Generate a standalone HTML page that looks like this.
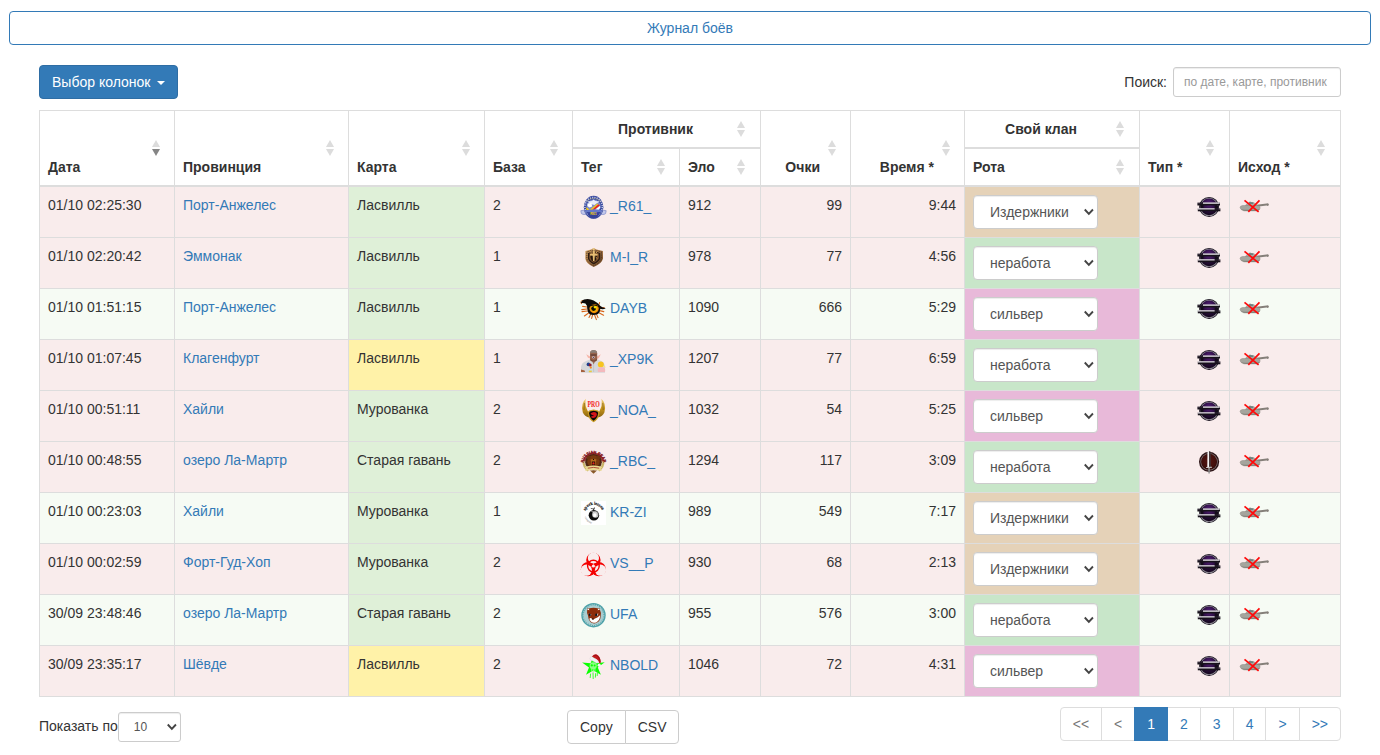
<!DOCTYPE html>
<html lang="ru"><head><meta charset="utf-8"><title>Журнал боёв</title>
<style>
*{box-sizing:border-box}
html,body{margin:0;padding:0}
body{width:1380px;height:755px;overflow:hidden;background:#fff;font-family:"Liberation Sans",sans-serif;font-size:14px;line-height:20px;color:#333;position:relative}
a{color:#337ab7;text-decoration:none}
.title{position:absolute;left:9px;top:11px;width:1362px;height:34px;border:1px solid #337ab7;border-radius:4px;text-align:center;padding:6px 12px;color:#337ab7;display:block}
.wrap{position:absolute;left:39px;top:0;width:1302px;height:755px}
.colsel{position:absolute;left:0;top:65px;height:34px;width:139px;background:#337ab7;border:1px solid #2e6da4;border-radius:4px;color:#fff;font:inherit;padding:6px 12px;text-align:left;white-space:nowrap;margin:0}
.caret{display:inline-block;width:0;height:0;margin-left:3px;vertical-align:middle;border-top:4px solid #fff;border-right:4px solid transparent;border-left:4px solid transparent}
.search{position:absolute;right:0;top:67px;height:30px;white-space:nowrap}
.search label{display:inline-block;vertical-align:middle;margin-right:6px;line-height:30px}
.search .inp{display:inline-block;vertical-align:middle;width:168px;height:30px;border:1px solid #ccc;border-radius:3px;padding:5px 10px;font-size:12px;line-height:18px;color:#999;overflow:hidden;box-shadow:inset 0 1px 1px rgba(0,0,0,.075)}
table.dt{position:absolute;left:0;top:110px;width:1302px;border-collapse:separate;border-spacing:0;table-layout:fixed;border:1px solid #ddd;border-right:0;border-bottom:0}
.dt th,.dt td{padding:8px;border-right:1px solid #ddd;border-bottom:1px solid #ddd;text-align:left;vertical-align:top;line-height:20px;overflow:hidden;white-space:nowrap}
.dt th{vertical-align:bottom;border-bottom:2px solid #ddd;font-weight:bold;position:relative;padding-right:30px}
.dt th.c{text-align:center}
.dt th.r,.dt td.r{text-align:right}
.dt th i{position:absolute;right:14px;width:0;height:0;border-left:4px solid transparent;border-right:4px solid transparent}
.dt th.s15 i{right:15px}
.dt th i.su{bottom:50%;margin-bottom:1px;border-bottom:7px solid #dcdcdc}
.dt th i.sd{top:50%;margin-top:1px;border-top:7px solid #dcdcdc}
.dt th.desc i.sd{border-top-color:#858585}
.dt td{height:51px}
tr.L td{background:#f9ecec}
tr.W td{background:#f6fbf4}
.dt tr td.mg{background:#dff0d8}
.dt tr td.my{background:#fff2a8}
.dt tr td.tan{background:#e5d2b8}
.dt tr td.grn{background:#c8e6c9}
.dt tr td.pnk{background:#e8b9d9}
td.tag a{display:inline-block;white-space:nowrap}
td.tag svg{vertical-align:middle;margin-right:4px;overflow:visible}
.sel{display:inline-block;position:relative;width:125px;height:34px;border:1px solid #ccc;border-radius:4px;background:#fff;padding:6px 12px 6px 16px;font-size:14px;line-height:20px;color:#555;box-shadow:inset 0 1px 1px rgba(0,0,0,.075);vertical-align:top}
.sel .chev{position:absolute;right:1px;top:11px}
.sel.sm{width:63px;height:30px;font-size:12px;line-height:18px;padding:5px 10px 5px 15px;border-radius:3px}
.sel.sm .chev{top:9px;right:1px}
td.tp{text-align:right}
td.tp svg,td.res svg{display:block}
td.tp svg{margin-left:auto}
.len{position:absolute;left:0;top:712px;height:30px;white-space:nowrap}
.len label{display:inline-block;line-height:30px;vertical-align:top;margin-right:0;position:relative;top:-1px}
.btns{position:absolute;left:528px;top:710px;white-space:nowrap;font-size:0}
.btn{display:inline-block;height:34px;border:1px solid #ccc;padding:6px 12px;font-size:14px;line-height:20px;color:#333;background:#fff;border-radius:4px}
.btns .btn:first-child{border-radius:4px 0 0 4px}
.btns .btn+.btn{margin-left:-1px;border-radius:0 4px 4px 0}
.pg{position:absolute;right:0;top:707px;margin:0;padding:0;list-style:none;white-space:nowrap;font-size:0;display:block}
.pg li{display:inline}
.pg li a{position:relative;float:left;padding:6px 12px;margin-left:-1px;line-height:20px;font-size:14px;color:#337ab7;background:#fff;border:1px solid #ddd}
.pg li:first-child a{margin-left:0;border-radius:4px 0 0 4px}
.pg li:last-child a{border-radius:0 4px 4px 0}
.pg li.dis a{color:#777}
.pg li.act a{background:#337ab7;border-color:#337ab7;color:#fff;z-index:2}

</style></head><body>
<a class="title" href="#">Журнал боёв</a>
<div class="wrap">
<button class="btn-primary colsel">Выбор колонок <span class="caret"></span></button>
<div class="search"><label>Поиск:</label><span class="inp">по дате, карте, противник</span></div>
<table class="dt"><colgroup><col style="width:135px"><col style="width:174px"><col style="width:136px"><col style="width:88px"><col style="width:107px"><col style="width:81px"><col style="width:90px"><col style="width:114px"><col style="width:175px"><col style="width:90px"><col style="width:111px"></colgroup>
<thead>
<tr><th rowspan="2" class="desc">Дата<i class="su"></i><i class="sd"></i></th><th rowspan="2">Провинция<i class="su"></i><i class="sd"></i></th><th rowspan="2">Карта<i class="su"></i><i class="sd"></i></th><th rowspan="2">База<i class="su"></i><i class="sd"></i></th><th colspan="2" class="c s15">Противник<i class="su"></i><i class="sd"></i></th><th rowspan="2" class="r">Очки<i class="su"></i><i class="sd"></i></th><th rowspan="2" class="r">Время *<i class="su"></i><i class="sd"></i></th><th class="c s15">Свой клан<i class="su"></i><i class="sd"></i></th><th rowspan="2" class="s15">Тип *<i class="su"></i><i class="sd"></i></th><th rowspan="2" class="last s15">Исход *<i class="su"></i><i class="sd"></i></th></tr>
<tr><th>Тег<i class="su"></i><i class="sd"></i></th><th class="s15">Эло<i class="su"></i><i class="sd"></i></th><th class="s15">Рота<i class="su"></i><i class="sd"></i></th></tr>
</thead>
<tbody>
<tr class="L"><td>01/10 02:25:30</td><td><a href="#">Порт-Анжелес</a></td><td class="mg">Ласвилль</td><td>2</td><td class="tag"><a href="#"><svg width="25" height="24" viewBox="0 0 25 24"><path d="M-.2 15.7 L4.4 15 L5.6 19.6 L2 19.4 L.4 18.6Z M25.2 15.7 L20.6 15 L19.4 19.6 L23 19.4 L24.6 18.6Z" fill="#c3c8ea" stroke="#6f7cc4" stroke-width=".6"/><ellipse cx="12.6" cy="12.3" rx="9.8" ry="11.5" fill="#3a4a9e"/><ellipse cx="12.6" cy="12" rx="8.7" ry="9.6" fill="none" stroke="#dfe3f6" stroke-width="1.5" stroke-dasharray="1.1 1.2" opacity=".85"/><ellipse cx="12.6" cy="11.2" rx="7" ry="6.6" fill="#7f8bca"/><path d="M5.6 6.4 Q12.6 .6 19.6 6.4" fill="none" stroke="#b9b48c" stroke-width=".8" stroke-dasharray="1.4 .6"/><path d="M6.6 6.4 L11 6 L12.6 4.6 L14.2 6 L18.8 6.4 L15.4 8.6 L13.6 10 L11.4 9.6 L9 8.4Z" fill="#e9ecf9"/><path d="M6.6 8.4 L10.4 8 L11.2 11.6 L8.4 12.6 L6.4 11Z" fill="#fff"/><path d="M5 12.4 L6.4 12.8 L8.6 15 L16.2 8.4 L17 9.6 L10.2 15.8 L8.4 16.2 L5.4 14.8Z" fill="#f3c817"/><path d="M11.6 14.4 L17.4 9.4 L18.8 10 L18.4 10.8 L13.6 14.6Z" fill="#ff1a0d"/><path d="M14.4 14.6 L18.8 11 L19.4 12.6 L17.6 14.8Z" fill="#fff"/><path d="M4.4 15.2 Q12.6 13.6 20.8 15.2 L20.4 17.2 L4.8 17.2Z" fill="#6477c8"/><path d="M5.6 17 Q12.6 18.4 19.6 17 Q17 22.6 12.6 23.6 Q8 22.6 5.6 17Z" fill="#35429a"/><text x="12.5" y="20.3" font-family="Liberation Sans, sans-serif" font-weight="bold" font-size="3.6" fill="#f5d21c" text-anchor="middle">R61</text></svg><span>_R61_</span></a></td><td>912</td><td class="r">99</td><td class="r">9:44</td><td class="rota tan"><span class="sel">Издержники<svg class="chev" width="14" height="10" viewBox="0 0 14 10"><path d="M2.75 2.5 L6.85 6.9 L10.95 2.5" fill="none" stroke="#444" stroke-width="1.85"/></svg></span></td><td class="tp"><svg width="24" height="24" viewBox="0 0 24 24"><defs><radialGradient id="ts" cx=".5" cy=".3" r=".75"><stop offset="0" stop-color="#57217c"/><stop offset=".45" stop-color="#2f0f46"/><stop offset="1" stop-color="#0e0514"/></radialGradient></defs><circle cx="12.1" cy="11.9" r="10" fill="#1a1420"/><circle cx="12.1" cy="11.9" r="9.2" fill="#8e8a94"/><circle cx="12.1" cy="11.9" r="8.4" fill="url(#ts)"/><path d="M3 7.4 L6.4 7.4 L6.4 13.4 L3.4 13.4Z M21.2 10.6 L17.8 10.6 L17.8 16.2 L21 16.2Z" fill="#140c1a"/><rect x=".4" y="7.6" width="22.6" height="1.3" fill="#2a2230"/><rect x="6" y="7.5" width="16.6" height="1.4" fill="#f6f3f8"/><rect x=".4" y="8.8" width="22.6" height="1.7" fill="#17121b"/><rect x=".8" y="13.4" width="22.6" height="1.3" fill="#2a2230"/><rect x="1" y="13.3" width="16.6" height="1.4" fill="#f6f3f8"/><rect x=".8" y="14.6" width="22.6" height="1.7" fill="#17121b"/></svg></td><td class="res last"><svg width="32" height="24" viewBox="0 0 32 24"><g transform="translate(0,3.7)"><path d="M16.6 6.3 L28.6 4.9 L29.6 4.6 Q30.9 4.8 30.9 5.9 Q30.9 7 29.6 7.2 L28.6 6.9 L17 8.4Z" fill="#857f79"/><path d="M7.4 6.4 Q8.6 4.2 11 3.6 L11.6 2.8 L12.6 2.8 L13 3.4 Q17.4 3.6 18.6 6.2 L19.4 8 L7 8Z" fill="#a9aaa2"/><path d="M11 3.6 L15.6 3.8 L15 5 L11.4 5Z" fill="#5e7472"/><path d="M2 9 Q2 7 4.4 6.8 L20 6.8 Q22.2 7.4 22.2 9.4 Q21.6 11.6 19 12.2 L6 12.2 Q2.6 11.4 2 9Z" fill="#a5a59d" stroke="#7d7c75" stroke-width=".4"/><path d="M3 10.4 Q6 12.8 10 12.2 L19 12.2 Q21.4 11.8 22 10 Q20 11 17 11 L6 11Z" fill="#85847c"/></g><path d="M6.5 5.4 L20.6 16.9 M21.5 5.4 L10.3 16.9" stroke="#ff0a0a" stroke-width="1.7" fill="none"/></svg></td></tr>
<tr class="L"><td>01/10 02:20:42</td><td><a href="#">Эммонак</a></td><td class="mg">Ласвилль</td><td>1</td><td class="tag"><a href="#"><svg width="25" height="24" viewBox="0 0 25 24"><defs><linearGradient id="mg" x1="0" y1="0" x2="1" y2="1"><stop offset="0" stop-color="#d9a866"/><stop offset=".5" stop-color="#a87440"/><stop offset="1" stop-color="#5e3a1c"/></linearGradient></defs><path d="M12.7 1.9 L15.5 3.6 L21.9 5 L22 12.6 Q21 17.6 12.7 21.1 Q4.8 17.6 4.3 12.6 L4.4 5 L10 3.6Z" fill="url(#mg)"/><path d="M12.7 3.9 L20.4 5.9 L20.4 12.4 Q19.4 16.8 12.7 19.7 Q6.2 16.8 5.9 12.4 L5.9 5.9Z" fill="none" stroke="#3a2a24" stroke-width=".9" stroke-dasharray="1.1 .8"/><path d="M12.7 5 L19.3 6.9 L19.3 12.2 Q18.4 15.8 12.7 18.4 Q7.2 15.8 7 12.2 L7 6.9Z" fill="#2b1b12"/><path d="M12.7 6 L17.9 7.6 L17.9 12 Q17.2 14.8 12.7 16.8 Q8.4 14.8 8.2 12 L8.2 7.6Z" fill="#7a4e2a"/><path d="M9.6 11.2 Q9.2 8.2 12.7 7.8 Q16.2 8.2 15.8 11.2 L14.8 14.4 L12.7 15.6 L10.6 14.4Z" fill="#24150d"/><path d="M11.7 4.6 L13.8 4.6 L13.8 7.9 L16.6 7.7 L16.6 9.6 L13.8 9.8 L13.5 15 L12 15 L11.7 9.8 L9 9.6 L9 7.7 L11.7 7.9Z" fill="#e6bd73"/><path d="M12.7 1.9 L14.4 3.2 L12.7 4 L11 3.2Z" fill="#f0cf8a"/><path d="M9 5.6 L11 7.4 M16.4 5.6 L14.6 7.4 M14.6 11 L16.4 12.6" stroke="#e2b568" stroke-width=".8"/></svg><span>M-I_R</span></a></td><td>978</td><td class="r">77</td><td class="r">4:56</td><td class="rota grn"><span class="sel">неработа<svg class="chev" width="14" height="10" viewBox="0 0 14 10"><path d="M2.75 2.5 L6.85 6.9 L10.95 2.5" fill="none" stroke="#444" stroke-width="1.85"/></svg></span></td><td class="tp"><svg width="24" height="24" viewBox="0 0 24 24"><defs><radialGradient id="ts" cx=".5" cy=".3" r=".75"><stop offset="0" stop-color="#57217c"/><stop offset=".45" stop-color="#2f0f46"/><stop offset="1" stop-color="#0e0514"/></radialGradient></defs><circle cx="12.1" cy="11.9" r="10" fill="#1a1420"/><circle cx="12.1" cy="11.9" r="9.2" fill="#8e8a94"/><circle cx="12.1" cy="11.9" r="8.4" fill="url(#ts)"/><path d="M3 7.4 L6.4 7.4 L6.4 13.4 L3.4 13.4Z M21.2 10.6 L17.8 10.6 L17.8 16.2 L21 16.2Z" fill="#140c1a"/><rect x=".4" y="7.6" width="22.6" height="1.3" fill="#2a2230"/><rect x="6" y="7.5" width="16.6" height="1.4" fill="#f6f3f8"/><rect x=".4" y="8.8" width="22.6" height="1.7" fill="#17121b"/><rect x=".8" y="13.4" width="22.6" height="1.3" fill="#2a2230"/><rect x="1" y="13.3" width="16.6" height="1.4" fill="#f6f3f8"/><rect x=".8" y="14.6" width="22.6" height="1.7" fill="#17121b"/></svg></td><td class="res last"><svg width="32" height="24" viewBox="0 0 32 24"><g transform="translate(0,3.7)"><path d="M16.6 6.3 L28.6 4.9 L29.6 4.6 Q30.9 4.8 30.9 5.9 Q30.9 7 29.6 7.2 L28.6 6.9 L17 8.4Z" fill="#857f79"/><path d="M7.4 6.4 Q8.6 4.2 11 3.6 L11.6 2.8 L12.6 2.8 L13 3.4 Q17.4 3.6 18.6 6.2 L19.4 8 L7 8Z" fill="#a9aaa2"/><path d="M11 3.6 L15.6 3.8 L15 5 L11.4 5Z" fill="#5e7472"/><path d="M2 9 Q2 7 4.4 6.8 L20 6.8 Q22.2 7.4 22.2 9.4 Q21.6 11.6 19 12.2 L6 12.2 Q2.6 11.4 2 9Z" fill="#a5a59d" stroke="#7d7c75" stroke-width=".4"/><path d="M3 10.4 Q6 12.8 10 12.2 L19 12.2 Q21.4 11.8 22 10 Q20 11 17 11 L6 11Z" fill="#85847c"/></g><path d="M6.5 5.4 L20.6 16.9 M21.5 5.4 L10.3 16.9" stroke="#ff0a0a" stroke-width="1.7" fill="none"/></svg></td></tr>
<tr class="W"><td>01/10 01:51:15</td><td><a href="#">Порт-Анжелес</a></td><td class="mg">Ласвилль</td><td>1</td><td class="tag"><a href="#"><svg width="25" height="24" viewBox="0 0 25 24"><g stroke="#d9661c" stroke-width="1.1" stroke-linecap="round" fill="none"><path d="M6 10 L1.6 9.4 M6 12 L.8 12.6 M6.4 14 L1 14.6 M7.6 16 L3.4 19 M9.6 17.6 L8 20.4 M11.6 18 L10.6 21.4 M13.6 18 L15.4 22.6 M15.6 17.4 L17 20.6 M17.4 15.6 L22.6 18.2 M18.6 13.6 L22.8 14.6 M19 11.6 L23.2 10.6 M17.6 8.4 L18.6 5.6 M3 4.6 L1 3.6 M.6 6.6 L-.2 5"/></g><path d="M-.2 6.2 Q0 3.6 3 2.6 Q8 1.2 12.6 3.6 Q16.6 5.6 19.4 9 Q21.6 11 24.8 11.2 Q22 12.8 19.2 11.8 Q19.4 14.8 17 17 Q13 18.8 9 17.6 Q6.2 15.4 6.2 11.4 Q6.2 8.2 4.4 6.6 Q2.4 5.4 -.2 6.2Z" fill="#0d0a08"/><circle cx="13.1" cy="11.6" r="4.6" fill="#f28a06"/><circle cx="13.1" cy="11.6" r="3.3" fill="#f7b305"/><circle cx="12.6" cy="11.6" r="2.4" fill="#0a0a02"/><circle cx="14.1" cy="10.2" r="1.2" fill="#f2e400"/><path d="M6.4 8.6 Q12 5.4 18.4 9.4 L19.6 11.2 Q14 6.4 7 10.4Z" fill="#0d0a08"/></svg><span>DAYB</span></a></td><td>1090</td><td class="r">666</td><td class="r">5:29</td><td class="rota pnk"><span class="sel">сильвер<svg class="chev" width="14" height="10" viewBox="0 0 14 10"><path d="M2.75 2.5 L6.85 6.9 L10.95 2.5" fill="none" stroke="#444" stroke-width="1.85"/></svg></span></td><td class="tp"><svg width="24" height="24" viewBox="0 0 24 24"><defs><radialGradient id="ts" cx=".5" cy=".3" r=".75"><stop offset="0" stop-color="#57217c"/><stop offset=".45" stop-color="#2f0f46"/><stop offset="1" stop-color="#0e0514"/></radialGradient></defs><circle cx="12.1" cy="11.9" r="10" fill="#1a1420"/><circle cx="12.1" cy="11.9" r="9.2" fill="#8e8a94"/><circle cx="12.1" cy="11.9" r="8.4" fill="url(#ts)"/><path d="M3 7.4 L6.4 7.4 L6.4 13.4 L3.4 13.4Z M21.2 10.6 L17.8 10.6 L17.8 16.2 L21 16.2Z" fill="#140c1a"/><rect x=".4" y="7.6" width="22.6" height="1.3" fill="#2a2230"/><rect x="6" y="7.5" width="16.6" height="1.4" fill="#f6f3f8"/><rect x=".4" y="8.8" width="22.6" height="1.7" fill="#17121b"/><rect x=".8" y="13.4" width="22.6" height="1.3" fill="#2a2230"/><rect x="1" y="13.3" width="16.6" height="1.4" fill="#f6f3f8"/><rect x=".8" y="14.6" width="22.6" height="1.7" fill="#17121b"/></svg></td><td class="res last"><svg width="32" height="24" viewBox="0 0 32 24"><g transform="translate(0,3.7)"><path d="M16.6 6.3 L28.6 4.9 L29.6 4.6 Q30.9 4.8 30.9 5.9 Q30.9 7 29.6 7.2 L28.6 6.9 L17 8.4Z" fill="#857f79"/><path d="M7.4 6.4 Q8.6 4.2 11 3.6 L11.6 2.8 L12.6 2.8 L13 3.4 Q17.4 3.6 18.6 6.2 L19.4 8 L7 8Z" fill="#a9aaa2"/><path d="M11 3.6 L15.6 3.8 L15 5 L11.4 5Z" fill="#5e7472"/><path d="M2 9 Q2 7 4.4 6.8 L20 6.8 Q22.2 7.4 22.2 9.4 Q21.6 11.6 19 12.2 L6 12.2 Q2.6 11.4 2 9Z" fill="#a5a59d" stroke="#7d7c75" stroke-width=".4"/><path d="M3 10.4 Q6 12.8 10 12.2 L19 12.2 Q21.4 11.8 22 10 Q20 11 17 11 L6 11Z" fill="#85847c"/></g><path d="M6.5 5.4 L20.6 16.9 M21.5 5.4 L10.3 16.9" stroke="#ff0a0a" stroke-width="1.7" fill="none"/></svg></td></tr>
<tr class="L"><td>01/10 01:07:45</td><td><a href="#">Клагенфурт</a></td><td class="my">Ласвилль</td><td>1</td><td class="tag"><a href="#"><svg width="25" height="24" viewBox="0 0 25 24"><path d="M5.2 6.2 L9.2 8.4 L9.2 10.4 L7 9.8Z M19.8 6.2 L16 8.4 L16 10.8 L17.8 10.2Z" fill="#f6b5a8"/><path d="M0 24.8 L0 19 Q.6 15 4.6 13.2 L9.4 11.2 L16 11.2 L20.4 13 Q23.8 14.6 24 19 L24 24.8Z" fill="#d6d6d9"/><path d="M10.6 12 L12.6 16.4 L14.8 12Z" fill="#9a6a52"/><path d="M12.6 16 L12.6 24" stroke="#b9b9bc" stroke-width=".6"/><rect x="9" y="2.2" width="7.2" height="11.4" rx="3.2" fill="#96634c"/><path d="M9 6 Q9 2 12.6 2 Q16.2 2 16.2 6 L15.6 4.8 L9.6 4.8Z" fill="#8a8078"/><rect x="9.6" y="6.4" width="6" height="1.2" fill="#5d3a33"/><ellipse cx="12.4" cy="9.3" rx="1.3" ry="1.1" fill="#e3d5dc"/><circle cx="12.4" cy="9.3" r=".6" fill="#3a2c50"/><path d="M9.4 10.4 Q12.6 14.4 15.8 10.4 L15.6 12.4 Q12.6 14.6 9.6 12.4Z" fill="#7a4632"/><circle cx="7.4" cy="16.4" r="1.8" fill="#1f3f8f"/><circle cx="9.2" cy="17" r="1.5" fill="#8f1a2a"/><circle cx="9.8" cy="19.6" r="1.1" fill="#f08a1e"/><rect x="7.4" y="21" width="3.8" height="3.2" fill="#bfe0ea"/><rect x="7.8" y="22.6" width="3" height="1.6" fill="#f2c73a"/><circle cx="19.8" cy="16.4" r="3" fill="#f7c41f"/><path d="M16.6 21 Q18 18.6 21 19.2 Q24.2 19 24.2 22 L24 24 L17 24Z" fill="#f3b9bd"/><path d="M21.6 18.6 Q24.6 16.6 24.4 20Z" fill="#f5e08a"/><path d="M0 24 L0 21.6 L3.6 22.6 L4 24Z" fill="#a6603c"/></svg><span>_XP9K</span></a></td><td>1207</td><td class="r">77</td><td class="r">6:59</td><td class="rota grn"><span class="sel">неработа<svg class="chev" width="14" height="10" viewBox="0 0 14 10"><path d="M2.75 2.5 L6.85 6.9 L10.95 2.5" fill="none" stroke="#444" stroke-width="1.85"/></svg></span></td><td class="tp"><svg width="24" height="24" viewBox="0 0 24 24"><defs><radialGradient id="ts" cx=".5" cy=".3" r=".75"><stop offset="0" stop-color="#57217c"/><stop offset=".45" stop-color="#2f0f46"/><stop offset="1" stop-color="#0e0514"/></radialGradient></defs><circle cx="12.1" cy="11.9" r="10" fill="#1a1420"/><circle cx="12.1" cy="11.9" r="9.2" fill="#8e8a94"/><circle cx="12.1" cy="11.9" r="8.4" fill="url(#ts)"/><path d="M3 7.4 L6.4 7.4 L6.4 13.4 L3.4 13.4Z M21.2 10.6 L17.8 10.6 L17.8 16.2 L21 16.2Z" fill="#140c1a"/><rect x=".4" y="7.6" width="22.6" height="1.3" fill="#2a2230"/><rect x="6" y="7.5" width="16.6" height="1.4" fill="#f6f3f8"/><rect x=".4" y="8.8" width="22.6" height="1.7" fill="#17121b"/><rect x=".8" y="13.4" width="22.6" height="1.3" fill="#2a2230"/><rect x="1" y="13.3" width="16.6" height="1.4" fill="#f6f3f8"/><rect x=".8" y="14.6" width="22.6" height="1.7" fill="#17121b"/></svg></td><td class="res last"><svg width="32" height="24" viewBox="0 0 32 24"><g transform="translate(0,3.7)"><path d="M16.6 6.3 L28.6 4.9 L29.6 4.6 Q30.9 4.8 30.9 5.9 Q30.9 7 29.6 7.2 L28.6 6.9 L17 8.4Z" fill="#857f79"/><path d="M7.4 6.4 Q8.6 4.2 11 3.6 L11.6 2.8 L12.6 2.8 L13 3.4 Q17.4 3.6 18.6 6.2 L19.4 8 L7 8Z" fill="#a9aaa2"/><path d="M11 3.6 L15.6 3.8 L15 5 L11.4 5Z" fill="#5e7472"/><path d="M2 9 Q2 7 4.4 6.8 L20 6.8 Q22.2 7.4 22.2 9.4 Q21.6 11.6 19 12.2 L6 12.2 Q2.6 11.4 2 9Z" fill="#a5a59d" stroke="#7d7c75" stroke-width=".4"/><path d="M3 10.4 Q6 12.8 10 12.2 L19 12.2 Q21.4 11.8 22 10 Q20 11 17 11 L6 11Z" fill="#85847c"/></g><path d="M6.5 5.4 L20.6 16.9 M21.5 5.4 L10.3 16.9" stroke="#ff0a0a" stroke-width="1.7" fill="none"/></svg></td></tr>
<tr class="L"><td>01/10 00:51:11</td><td><a href="#">Хайли</a></td><td class="mg">Мурованка</td><td>2</td><td class="tag"><a href="#"><svg width="25" height="24" viewBox="0 0 25 24"><defs><linearGradient id="ng" x1="0" y1="0" x2="0" y2="1"><stop offset="0" stop-color="#f1d27a"/><stop offset=".5" stop-color="#c8961c"/><stop offset="1" stop-color="#8a6410"/></linearGradient></defs><path d="M5 -.2 Q2.6 1.6 1.6 5 Q.4 9.6 1.8 13.6 Q3.6 17.4 8 18.6 L9.4 14.4 Q6.4 13 5.6 9.4 Q4.4 7.8 4.6 4.4 Q4 2.4 5 -.2Z" fill="url(#ng)"/><path d="M20.2 -.2 Q22.6 1.6 23.6 5 Q24.8 9.6 23.4 13.6 Q21.6 17.4 17.2 18.6 L15.8 14.4 Q18.8 13 19.6 9.4 Q20.8 7.8 20.6 4.4 Q21.2 2.4 20.2 -.2Z" fill="url(#ng)"/><path d="M3.4 4 L3 11 M21.8 4 L22.2 11" stroke="#6e5212" stroke-width=".6"/><g transform="translate(12.6 0) scale(1.2 1) translate(-12.6 0)"><path d="M12.6 10.6 L16.4 11.4 Q17.6 12.2 17.4 14.4 Q17 20 12.6 23.2 Q8.2 20 7.8 14.4 Q7.6 12.2 8.8 11.4Z" fill="#c79a23"/><path d="M12.6 11.8 L15.6 12.4 Q16.4 13 16.3 14.6 Q16 19 12.6 21.8 Q9.2 19 8.9 14.6 Q8.8 13 9.6 12.4Z" fill="#0d0707"/><path d="M10 14.6 Q12.6 11.6 15 14 Q16 16.4 13.8 18.6 Q11.4 19.6 10.2 17.4 Q11.8 17.6 13 16.6 Q11 16.6 10 14.6Z" fill="#d3151a"/></g><text x="12.6" y="8" font-family="Liberation Serif, serif" font-weight="bold" font-size="7.4" fill="#f01e1e" text-anchor="middle" textLength="12.2" lengthAdjust="spacingAndGlyphs">PRO</text></svg><span>_NOA_</span></a></td><td>1032</td><td class="r">54</td><td class="r">5:25</td><td class="rota pnk"><span class="sel">сильвер<svg class="chev" width="14" height="10" viewBox="0 0 14 10"><path d="M2.75 2.5 L6.85 6.9 L10.95 2.5" fill="none" stroke="#444" stroke-width="1.85"/></svg></span></td><td class="tp"><svg width="24" height="24" viewBox="0 0 24 24"><defs><radialGradient id="ts" cx=".5" cy=".3" r=".75"><stop offset="0" stop-color="#57217c"/><stop offset=".45" stop-color="#2f0f46"/><stop offset="1" stop-color="#0e0514"/></radialGradient></defs><circle cx="12.1" cy="11.9" r="10" fill="#1a1420"/><circle cx="12.1" cy="11.9" r="9.2" fill="#8e8a94"/><circle cx="12.1" cy="11.9" r="8.4" fill="url(#ts)"/><path d="M3 7.4 L6.4 7.4 L6.4 13.4 L3.4 13.4Z M21.2 10.6 L17.8 10.6 L17.8 16.2 L21 16.2Z" fill="#140c1a"/><rect x=".4" y="7.6" width="22.6" height="1.3" fill="#2a2230"/><rect x="6" y="7.5" width="16.6" height="1.4" fill="#f6f3f8"/><rect x=".4" y="8.8" width="22.6" height="1.7" fill="#17121b"/><rect x=".8" y="13.4" width="22.6" height="1.3" fill="#2a2230"/><rect x="1" y="13.3" width="16.6" height="1.4" fill="#f6f3f8"/><rect x=".8" y="14.6" width="22.6" height="1.7" fill="#17121b"/></svg></td><td class="res last"><svg width="32" height="24" viewBox="0 0 32 24"><g transform="translate(0,3.7)"><path d="M16.6 6.3 L28.6 4.9 L29.6 4.6 Q30.9 4.8 30.9 5.9 Q30.9 7 29.6 7.2 L28.6 6.9 L17 8.4Z" fill="#857f79"/><path d="M7.4 6.4 Q8.6 4.2 11 3.6 L11.6 2.8 L12.6 2.8 L13 3.4 Q17.4 3.6 18.6 6.2 L19.4 8 L7 8Z" fill="#a9aaa2"/><path d="M11 3.6 L15.6 3.8 L15 5 L11.4 5Z" fill="#5e7472"/><path d="M2 9 Q2 7 4.4 6.8 L20 6.8 Q22.2 7.4 22.2 9.4 Q21.6 11.6 19 12.2 L6 12.2 Q2.6 11.4 2 9Z" fill="#a5a59d" stroke="#7d7c75" stroke-width=".4"/><path d="M3 10.4 Q6 12.8 10 12.2 L19 12.2 Q21.4 11.8 22 10 Q20 11 17 11 L6 11Z" fill="#85847c"/></g><path d="M6.5 5.4 L20.6 16.9 M21.5 5.4 L10.3 16.9" stroke="#ff0a0a" stroke-width="1.7" fill="none"/></svg></td></tr>
<tr class="L"><td>01/10 00:48:55</td><td><a href="#">озеро Ла-Мартр</a></td><td class="mg">Старая гавань</td><td>2</td><td class="tag"><a href="#"><svg width="25" height="24" viewBox="0 0 25 24"><path id="rbarc" d="M2.9 11.6 A9.8 9.8 0 0 1 22.1 11.6" fill="none" stroke="#8e1a1f" stroke-opacity=".8" stroke-width="2.8"/><path d="M1.4 11 Q1.4 18 6.6 21.4 L8.2 19.6 Q3.6 16.2 3.4 11Z M23.6 11 Q23.6 18 18.4 21.4 L16.8 19.6 Q21.4 16.2 21.6 11Z" fill="#c9b56a"/><circle cx="12.5" cy="12.2" r="8.3" fill="#4f2712"/><circle cx="12.5" cy="11.4" r="6.2" fill="#7a3a10"/><circle cx="7.6" cy="7.4" r="2" fill="#6e3511"/><circle cx="17.4" cy="7.4" r="2" fill="#6e3511"/><path d="M9.6 9.6 Q12.5 8 15.4 9.6 L14.4 14.6 Q12.5 16 10.6 14.6Z" fill="#b36a1f"/><path d="M10.8 11.4 L14.2 11.4 L13.8 15.4 L11.2 15.4Z" fill="#26110a"/><circle cx="12.5" cy="13.4" r="1.1" fill="#e3251c"/><circle cx="12.5" cy="9.4" r=".6" fill="#1a0c06"/><path d="M3.8 17 L6.4 16.2 Q12.5 14.6 18.6 16.2 L21.2 17 L19.6 19 L21 20.8 L18 20.6 Q12.5 19.4 7 20.6 L4 20.8 L5.4 19Z" fill="#e9d992"/><path d="M6.8 18.2 Q12.5 16.6 18.2 18.2" fill="none" stroke="#a8402e" stroke-width=".9"/><path d="M9 20.4 L16 20.4 L12.5 23.8Z" fill="#8a5a2a"/><text font-family="Liberation Sans, sans-serif" font-weight="bold" font-size="4.3" fill="#7e0d12" stroke="#7e0d12" stroke-width=".25"><textPath href="#rbarc" startOffset="50%" text-anchor="middle" textLength="29" lengthAdjust="spacingAndGlyphs">RUSSIAN BEAR</textPath></text></svg><span>_RBC_</span></a></td><td>1294</td><td class="r">117</td><td class="r">3:09</td><td class="rota grn"><span class="sel">неработа<svg class="chev" width="14" height="10" viewBox="0 0 14 10"><path d="M2.75 2.5 L6.85 6.9 L10.95 2.5" fill="none" stroke="#444" stroke-width="1.85"/></svg></span></td><td class="tp"><svg width="24" height="24" viewBox="0 0 24 24"><defs><radialGradient id="td" cx=".5" cy=".45" r=".6"><stop offset="0" stop-color="#541410"/><stop offset=".7" stop-color="#42100d"/><stop offset="1" stop-color="#260807"/></radialGradient></defs><circle cx="12.1" cy="11.8" r="10.1" fill="#2a1214"/><circle cx="12.1" cy="11.8" r="8.7" fill="#857a7c"/><circle cx="12.1" cy="11.8" r="8" fill="url(#td)"/><path d="M10.5 1.6 L12.1 .9 L12.1 17 L10.3 17Z" fill="#f2f2f2"/><path d="M12.1 .9 L13.7 1.8 L13.8 17 L12.1 17Z" fill="#403638"/><path d="M9.2 17 L14.9 16.7 L14.9 17.7 L9.2 18Z" fill="#d8d8d8"/><path d="M11.2 18 L12.9 18 L12.8 23.6 L11.4 23.6Z" fill="#8e8e8e"/></svg></td><td class="res last"><svg width="32" height="24" viewBox="0 0 32 24"><g transform="translate(0,3.7)"><path d="M16.6 6.3 L28.6 4.9 L29.6 4.6 Q30.9 4.8 30.9 5.9 Q30.9 7 29.6 7.2 L28.6 6.9 L17 8.4Z" fill="#857f79"/><path d="M7.4 6.4 Q8.6 4.2 11 3.6 L11.6 2.8 L12.6 2.8 L13 3.4 Q17.4 3.6 18.6 6.2 L19.4 8 L7 8Z" fill="#a9aaa2"/><path d="M11 3.6 L15.6 3.8 L15 5 L11.4 5Z" fill="#5e7472"/><path d="M2 9 Q2 7 4.4 6.8 L20 6.8 Q22.2 7.4 22.2 9.4 Q21.6 11.6 19 12.2 L6 12.2 Q2.6 11.4 2 9Z" fill="#a5a59d" stroke="#7d7c75" stroke-width=".4"/><path d="M3 10.4 Q6 12.8 10 12.2 L19 12.2 Q21.4 11.8 22 10 Q20 11 17 11 L6 11Z" fill="#85847c"/></g><path d="M6.5 5.4 L20.6 16.9 M21.5 5.4 L10.3 16.9" stroke="#ff0a0a" stroke-width="1.7" fill="none"/></svg></td></tr>
<tr class="W"><td>01/10 00:23:03</td><td><a href="#">Хайли</a></td><td class="mg">Мурованка</td><td>1</td><td class="tag"><a href="#"><svg width="25" height="24" viewBox="0 0 25 24"><rect x="0" y="0" width="25" height="24" fill="#fff"/><path id="kzarc" d="M4.2 10.6 A8.9 8.9 0 0 1 21.4 10.2" fill="none"/><text font-family="Liberation Serif, serif" font-weight="bold" font-size="4.4" fill="#2c2c2c" stroke="#2c2c2c" stroke-width=".2"><textPath href="#kzarc" startOffset="50%" text-anchor="middle" textLength="21" lengthAdjust="spacingAndGlyphs">spark lesson</textPath></text><path id="kzarc2" d="M3.4 14.8 A9.6 9.6 0 0 0 12 22.8" fill="none"/><text font-family="Liberation Serif, serif" font-size="2.8" fill="#777"><textPath href="#kzarc2" startOffset="50%" text-anchor="middle">company</textPath></text><circle cx="12.9" cy="14.2" r="5.25" fill="#0c0c0c"/><circle cx="14.4" cy="13.5" r="3.2" fill="#fff" opacity=".8"/><ellipse cx="13.8" cy="14.1" rx="1.7" ry="1.9" fill="#fff"/><path d="M15.8 10.6 Q18 12.6 17.4 15.4" fill="none" stroke="#222" stroke-width=".7" opacity=".7"/><path d="M12.4 9.4 L13.4 6.6" stroke="#111" stroke-width="1"/><path d="M9.8 7.4 L12.6 8" stroke="#222" stroke-width=".7"/><path d="M9.2 10.2 L14 10.4 L12 11.4Z" fill="#fff" opacity=".75"/></svg><span>KR-ZI</span></a></td><td>989</td><td class="r">549</td><td class="r">7:17</td><td class="rota tan"><span class="sel">Издержники<svg class="chev" width="14" height="10" viewBox="0 0 14 10"><path d="M2.75 2.5 L6.85 6.9 L10.95 2.5" fill="none" stroke="#444" stroke-width="1.85"/></svg></span></td><td class="tp"><svg width="24" height="24" viewBox="0 0 24 24"><defs><radialGradient id="ts" cx=".5" cy=".3" r=".75"><stop offset="0" stop-color="#57217c"/><stop offset=".45" stop-color="#2f0f46"/><stop offset="1" stop-color="#0e0514"/></radialGradient></defs><circle cx="12.1" cy="11.9" r="10" fill="#1a1420"/><circle cx="12.1" cy="11.9" r="9.2" fill="#8e8a94"/><circle cx="12.1" cy="11.9" r="8.4" fill="url(#ts)"/><path d="M3 7.4 L6.4 7.4 L6.4 13.4 L3.4 13.4Z M21.2 10.6 L17.8 10.6 L17.8 16.2 L21 16.2Z" fill="#140c1a"/><rect x=".4" y="7.6" width="22.6" height="1.3" fill="#2a2230"/><rect x="6" y="7.5" width="16.6" height="1.4" fill="#f6f3f8"/><rect x=".4" y="8.8" width="22.6" height="1.7" fill="#17121b"/><rect x=".8" y="13.4" width="22.6" height="1.3" fill="#2a2230"/><rect x="1" y="13.3" width="16.6" height="1.4" fill="#f6f3f8"/><rect x=".8" y="14.6" width="22.6" height="1.7" fill="#17121b"/></svg></td><td class="res last"><svg width="32" height="24" viewBox="0 0 32 24"><g transform="translate(0,3.7)"><path d="M16.6 6.3 L28.6 4.9 L29.6 4.6 Q30.9 4.8 30.9 5.9 Q30.9 7 29.6 7.2 L28.6 6.9 L17 8.4Z" fill="#857f79"/><path d="M7.4 6.4 Q8.6 4.2 11 3.6 L11.6 2.8 L12.6 2.8 L13 3.4 Q17.4 3.6 18.6 6.2 L19.4 8 L7 8Z" fill="#a9aaa2"/><path d="M11 3.6 L15.6 3.8 L15 5 L11.4 5Z" fill="#5e7472"/><path d="M2 9 Q2 7 4.4 6.8 L20 6.8 Q22.2 7.4 22.2 9.4 Q21.6 11.6 19 12.2 L6 12.2 Q2.6 11.4 2 9Z" fill="#a5a59d" stroke="#7d7c75" stroke-width=".4"/><path d="M3 10.4 Q6 12.8 10 12.2 L19 12.2 Q21.4 11.8 22 10 Q20 11 17 11 L6 11Z" fill="#85847c"/></g><path d="M6.5 5.4 L20.6 16.9 M21.5 5.4 L10.3 16.9" stroke="#ff0a0a" stroke-width="1.7" fill="none"/></svg></td></tr>
<tr class="L"><td>01/10 00:02:59</td><td><a href="#">Форт-Гуд-Хоп</a></td><td class="mg">Мурованка</td><td>2</td><td class="tag"><a href="#"><svg width="25" height="24" viewBox="0 0 25 24"><defs><mask id="vm"><rect x="-2" y="-2" width="30" height="30" fill="#fff"/><circle cx="12.4" cy="5.9" r="5.6" fill="#000"/><circle cx="5.3" cy="18.2" r="5.6" fill="#000"/><circle cx="19.5" cy="18.2" r="5.6" fill="#000"/><circle cx="12.4" cy="14.1" r="1.5" fill="#000"/><path d="M12.4 14.1 L11.8 6 L13 6Z M12.4 14.1 L5.8 17.4 L5.2 16.4Z M12.4 14.1 L19 17.4 L19.6 16.4Z" fill="#000"/></mask><mask id="vr"><rect x="-2" y="-2" width="30" height="30" fill="#000"/><circle cx="12.4" cy="8" r="6.2" fill="#fff"/><circle cx="7.12" cy="17.15" r="6.2" fill="#fff"/><circle cx="17.68" cy="17.15" r="6.2" fill="#fff"/></mask></defs><g mask="url(#vm)" fill="#f40000"><circle cx="12.4" cy="8" r="7.2"/><circle cx="7.12" cy="17.15" r="7.2"/><circle cx="17.68" cy="17.15" r="7.2"/></g><g mask="url(#vr)"><circle cx="12.4" cy="14.1" r="5.8" fill="none" stroke="#f40000" stroke-width="1.4"/></g><circle cx="12.4" cy="14.1" r="1" fill="#fbe9e9"/></svg><span>VS__P</span></a></td><td>930</td><td class="r">68</td><td class="r">2:13</td><td class="rota tan"><span class="sel">Издержники<svg class="chev" width="14" height="10" viewBox="0 0 14 10"><path d="M2.75 2.5 L6.85 6.9 L10.95 2.5" fill="none" stroke="#444" stroke-width="1.85"/></svg></span></td><td class="tp"><svg width="24" height="24" viewBox="0 0 24 24"><defs><radialGradient id="ts" cx=".5" cy=".3" r=".75"><stop offset="0" stop-color="#57217c"/><stop offset=".45" stop-color="#2f0f46"/><stop offset="1" stop-color="#0e0514"/></radialGradient></defs><circle cx="12.1" cy="11.9" r="10" fill="#1a1420"/><circle cx="12.1" cy="11.9" r="9.2" fill="#8e8a94"/><circle cx="12.1" cy="11.9" r="8.4" fill="url(#ts)"/><path d="M3 7.4 L6.4 7.4 L6.4 13.4 L3.4 13.4Z M21.2 10.6 L17.8 10.6 L17.8 16.2 L21 16.2Z" fill="#140c1a"/><rect x=".4" y="7.6" width="22.6" height="1.3" fill="#2a2230"/><rect x="6" y="7.5" width="16.6" height="1.4" fill="#f6f3f8"/><rect x=".4" y="8.8" width="22.6" height="1.7" fill="#17121b"/><rect x=".8" y="13.4" width="22.6" height="1.3" fill="#2a2230"/><rect x="1" y="13.3" width="16.6" height="1.4" fill="#f6f3f8"/><rect x=".8" y="14.6" width="22.6" height="1.7" fill="#17121b"/></svg></td><td class="res last"><svg width="32" height="24" viewBox="0 0 32 24"><g transform="translate(0,3.7)"><path d="M16.6 6.3 L28.6 4.9 L29.6 4.6 Q30.9 4.8 30.9 5.9 Q30.9 7 29.6 7.2 L28.6 6.9 L17 8.4Z" fill="#857f79"/><path d="M7.4 6.4 Q8.6 4.2 11 3.6 L11.6 2.8 L12.6 2.8 L13 3.4 Q17.4 3.6 18.6 6.2 L19.4 8 L7 8Z" fill="#a9aaa2"/><path d="M11 3.6 L15.6 3.8 L15 5 L11.4 5Z" fill="#5e7472"/><path d="M2 9 Q2 7 4.4 6.8 L20 6.8 Q22.2 7.4 22.2 9.4 Q21.6 11.6 19 12.2 L6 12.2 Q2.6 11.4 2 9Z" fill="#a5a59d" stroke="#7d7c75" stroke-width=".4"/><path d="M3 10.4 Q6 12.8 10 12.2 L19 12.2 Q21.4 11.8 22 10 Q20 11 17 11 L6 11Z" fill="#85847c"/></g><path d="M6.5 5.4 L20.6 16.9 M21.5 5.4 L10.3 16.9" stroke="#ff0a0a" stroke-width="1.7" fill="none"/></svg></td></tr>
<tr class="W"><td>30/09 23:48:46</td><td><a href="#">озеро Ла-Мартр</a></td><td class="mg">Старая гавань</td><td>2</td><td class="tag"><a href="#"><svg width="25" height="24" viewBox="0 0 25 24"><circle cx="12.5" cy="12.2" r="12.2" fill="#4ea2a9"/><circle cx="12.5" cy="12.2" r="10" fill="#a9cdd0"/><circle cx="12.5" cy="12.2" r="10.3" fill="none" stroke="#a9cdd0" stroke-width="1.2" stroke-dasharray="1.3 .9"/><path d="M6.2 6.4 Q6 5 7.6 5.4 Q12.6 4 17.4 5.4 Q19.2 5 18.8 6.6 Q20.4 9.4 19.6 13.4 Q19.6 17.6 15.6 19.8 Q12.4 21.4 9.4 19 Q7 16 7 12.6 Q5.6 9.4 6.2 6.4Z" fill="#8c2d0b"/><path d="M6.4 6.8 Q6.2 5.2 7.8 5.8 L8.4 7.2Z M18.6 6.8 Q18.9 5.2 17.3 5.8 L16.6 7.2Z" fill="#fff"/><path d="M8.4 15.4 Q10 14.6 11 15.8 L12.4 16.4 L14 15.6 Q17 14.4 19 12.2 Q19.4 16.6 15.6 19.2 Q12.4 20.8 9.8 18.6 Q8.4 17 8.4 15.4Z" fill="#fff"/><path d="M7.6 10.6 L10.4 11.6 L9.4 13.2 Q7.8 12.6 7.6 10.6Z M17.4 10.4 L14.2 11.6 L15.4 13.2 Q17.2 12.6 17.4 10.4Z" fill="#f4ece8"/><ellipse cx="8.8" cy="11.8" rx="1" ry="1.3" fill="#0e1216" transform="rotate(-25 8.8 11.8)"/><ellipse cx="15.2" cy="11.8" rx="1.1" ry="1.3" fill="#0e1216" transform="rotate(25 15.2 11.8)"/><ellipse cx="11.8" cy="16" rx="1" ry=".7" fill="#2a0f06"/></svg><span>UFA</span></a></td><td>955</td><td class="r">576</td><td class="r">3:00</td><td class="rota grn"><span class="sel">неработа<svg class="chev" width="14" height="10" viewBox="0 0 14 10"><path d="M2.75 2.5 L6.85 6.9 L10.95 2.5" fill="none" stroke="#444" stroke-width="1.85"/></svg></span></td><td class="tp"><svg width="24" height="24" viewBox="0 0 24 24"><defs><radialGradient id="ts" cx=".5" cy=".3" r=".75"><stop offset="0" stop-color="#57217c"/><stop offset=".45" stop-color="#2f0f46"/><stop offset="1" stop-color="#0e0514"/></radialGradient></defs><circle cx="12.1" cy="11.9" r="10" fill="#1a1420"/><circle cx="12.1" cy="11.9" r="9.2" fill="#8e8a94"/><circle cx="12.1" cy="11.9" r="8.4" fill="url(#ts)"/><path d="M3 7.4 L6.4 7.4 L6.4 13.4 L3.4 13.4Z M21.2 10.6 L17.8 10.6 L17.8 16.2 L21 16.2Z" fill="#140c1a"/><rect x=".4" y="7.6" width="22.6" height="1.3" fill="#2a2230"/><rect x="6" y="7.5" width="16.6" height="1.4" fill="#f6f3f8"/><rect x=".4" y="8.8" width="22.6" height="1.7" fill="#17121b"/><rect x=".8" y="13.4" width="22.6" height="1.3" fill="#2a2230"/><rect x="1" y="13.3" width="16.6" height="1.4" fill="#f6f3f8"/><rect x=".8" y="14.6" width="22.6" height="1.7" fill="#17121b"/></svg></td><td class="res last"><svg width="32" height="24" viewBox="0 0 32 24"><g transform="translate(0,3.7)"><path d="M16.6 6.3 L28.6 4.9 L29.6 4.6 Q30.9 4.8 30.9 5.9 Q30.9 7 29.6 7.2 L28.6 6.9 L17 8.4Z" fill="#857f79"/><path d="M7.4 6.4 Q8.6 4.2 11 3.6 L11.6 2.8 L12.6 2.8 L13 3.4 Q17.4 3.6 18.6 6.2 L19.4 8 L7 8Z" fill="#a9aaa2"/><path d="M11 3.6 L15.6 3.8 L15 5 L11.4 5Z" fill="#5e7472"/><path d="M2 9 Q2 7 4.4 6.8 L20 6.8 Q22.2 7.4 22.2 9.4 Q21.6 11.6 19 12.2 L6 12.2 Q2.6 11.4 2 9Z" fill="#a5a59d" stroke="#7d7c75" stroke-width=".4"/><path d="M3 10.4 Q6 12.8 10 12.2 L19 12.2 Q21.4 11.8 22 10 Q20 11 17 11 L6 11Z" fill="#85847c"/></g><path d="M6.5 5.4 L20.6 16.9 M21.5 5.4 L10.3 16.9" stroke="#ff0a0a" stroke-width="1.7" fill="none"/></svg></td></tr>
<tr class="L"><td>30/09 23:35:17</td><td><a href="#">Шёвде</a></td><td class="my">Ласвилль</td><td>2</td><td class="tag"><a href="#"><svg width="25" height="24" viewBox="0 0 25 24"><path d="M12.4 2 L15.2 9.2 L23.7 8.2 L16.8 13.4 L19.9 20.8 L12.4 16.6 L5 20.8 L8 13.4 L1.1 8.6 L9.6 9.2Z" fill="#0bff00"/><path d="M9.6 20 L9.2 23.6 M12 19 L12.2 24.6 M14.6 19.6 L14.4 23.2 M16.4 19 L16.2 21.6" stroke="#3dff33" stroke-width="1" stroke-linecap="round"/><circle cx="12.2" cy="11.8" r="3.6" fill="#8dff86"/><circle cx="10.8" cy="11.4" r="1.1" fill="#0bff00"/><circle cx="13.6" cy="11.6" r="1" fill="#0bff00"/><path d="M10.6 15 L11 18 M12.4 15.4 L12.4 18.6 M14 15 L13.8 17.6" stroke="#9bff95" stroke-width=".8"/><path d="M10.8 2.8 Q12.6 -.4 15.8 .4 Q19.6 2.4 19.8 8.4 L18.6 10 Q17.6 6.4 15.6 5.2Z" fill="#c3181d"/><path d="M12.8 1.4 Q15.6 .4 17.6 3 Q19 5.4 19 8" fill="none" stroke="#8a0e12" stroke-width=".7"/><path d="M9.4 3.4 Q10.2 2.4 11.4 3 L16.8 6.4 Q17.6 7.6 16.8 8.8 Q16 9.4 15 8.8 L9.4 5.8 Q8.4 4.6 9.4 3.4Z" fill="#f4f2f6" stroke="#cfc9d4" stroke-width=".35"/><circle cx="18.2" cy="11.2" r="1.6" fill="#f6f4f8"/></svg><span>NBOLD</span></a></td><td>1046</td><td class="r">72</td><td class="r">4:31</td><td class="rota pnk"><span class="sel">сильвер<svg class="chev" width="14" height="10" viewBox="0 0 14 10"><path d="M2.75 2.5 L6.85 6.9 L10.95 2.5" fill="none" stroke="#444" stroke-width="1.85"/></svg></span></td><td class="tp"><svg width="24" height="24" viewBox="0 0 24 24"><defs><radialGradient id="ts" cx=".5" cy=".3" r=".75"><stop offset="0" stop-color="#57217c"/><stop offset=".45" stop-color="#2f0f46"/><stop offset="1" stop-color="#0e0514"/></radialGradient></defs><circle cx="12.1" cy="11.9" r="10" fill="#1a1420"/><circle cx="12.1" cy="11.9" r="9.2" fill="#8e8a94"/><circle cx="12.1" cy="11.9" r="8.4" fill="url(#ts)"/><path d="M3 7.4 L6.4 7.4 L6.4 13.4 L3.4 13.4Z M21.2 10.6 L17.8 10.6 L17.8 16.2 L21 16.2Z" fill="#140c1a"/><rect x=".4" y="7.6" width="22.6" height="1.3" fill="#2a2230"/><rect x="6" y="7.5" width="16.6" height="1.4" fill="#f6f3f8"/><rect x=".4" y="8.8" width="22.6" height="1.7" fill="#17121b"/><rect x=".8" y="13.4" width="22.6" height="1.3" fill="#2a2230"/><rect x="1" y="13.3" width="16.6" height="1.4" fill="#f6f3f8"/><rect x=".8" y="14.6" width="22.6" height="1.7" fill="#17121b"/></svg></td><td class="res last"><svg width="32" height="24" viewBox="0 0 32 24"><g transform="translate(0,3.7)"><path d="M16.6 6.3 L28.6 4.9 L29.6 4.6 Q30.9 4.8 30.9 5.9 Q30.9 7 29.6 7.2 L28.6 6.9 L17 8.4Z" fill="#857f79"/><path d="M7.4 6.4 Q8.6 4.2 11 3.6 L11.6 2.8 L12.6 2.8 L13 3.4 Q17.4 3.6 18.6 6.2 L19.4 8 L7 8Z" fill="#a9aaa2"/><path d="M11 3.6 L15.6 3.8 L15 5 L11.4 5Z" fill="#5e7472"/><path d="M2 9 Q2 7 4.4 6.8 L20 6.8 Q22.2 7.4 22.2 9.4 Q21.6 11.6 19 12.2 L6 12.2 Q2.6 11.4 2 9Z" fill="#a5a59d" stroke="#7d7c75" stroke-width=".4"/><path d="M3 10.4 Q6 12.8 10 12.2 L19 12.2 Q21.4 11.8 22 10 Q20 11 17 11 L6 11Z" fill="#85847c"/></g><path d="M6.5 5.4 L20.6 16.9 M21.5 5.4 L10.3 16.9" stroke="#ff0a0a" stroke-width="1.7" fill="none"/></svg></td></tr>
</tbody></table>
<div class="len"><label>Показать по</label><span class="sel sm">10<svg class="chev" width="14" height="10" viewBox="0 0 14 10"><path d="M2.75 2.5 L6.85 6.9 L10.95 2.5" fill="none" stroke="#444" stroke-width="1.85"/></svg></span></div>
<div class="btns"><a class="btn">Copy</a><a class="btn">CSV</a></div>
<ul class="pg"><li class="dis"><a>&lt;&lt;</a></li><li class="dis"><a>&lt;</a></li><li class="act"><a>1</a></li><li><a>2</a></li><li><a>3</a></li><li><a>4</a></li><li><a>&gt;</a></li><li><a>&gt;&gt;</a></li></ul>
</div>
</body></html>
